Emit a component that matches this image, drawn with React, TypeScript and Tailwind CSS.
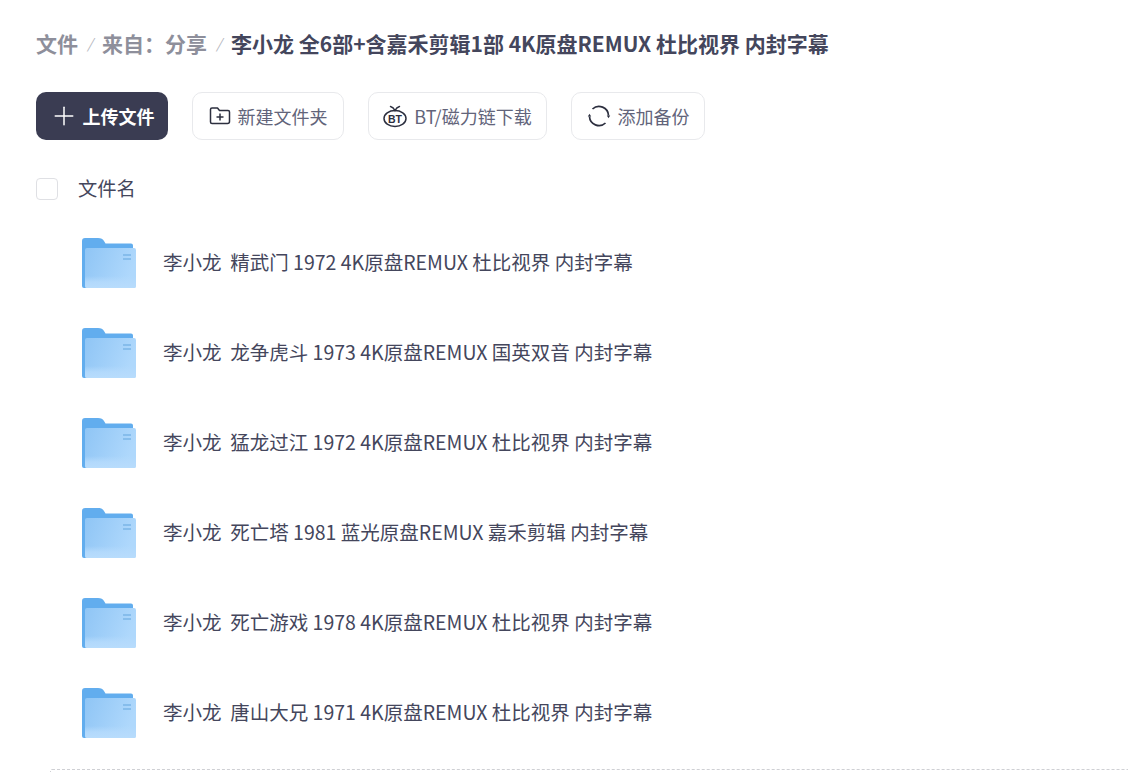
import React from 'react';
import { Plus } from 'lucide-react';

const files = [
  '精武门 1972 4K原盘REMUX 杜比视界 内封字幕',
  '龙争虎斗 1973 4K原盘REMUX 国英双音 内封字幕',
  '猛龙过江 1972 4K原盘REMUX 杜比视界 内封字幕',
  '死亡塔 1981 蓝光原盘REMUX 嘉禾剪辑 内封字幕',
  '死亡游戏 1978 4K原盘REMUX 杜比视界 内封字幕',
  '唐山大兄 1971 4K原盘REMUX 杜比视界 内封字幕',
];

const FolderIcon = ({ id }: { id: number }) => (
  <svg width="54" height="50" viewBox="0 0 54 50" className="shrink-0">
    <defs>
      <linearGradient id={`front-${id}`} x1="0" y1="0" x2="1" y2="0.3">
        <stop offset="0" stopColor="#8fc5f5" />
        <stop offset="1" stopColor="#afd8fc" />
      </linearGradient>
      <linearGradient id={`band-${id}`} x1="0" y1="0" x2="0" y2="1">
        <stop offset="0" stopColor="#b4dafc" stopOpacity="0" />
        <stop offset="0.5" stopColor="#b4dafc" stopOpacity="0.9" />
        <stop offset="1" stopColor="#b8dcfc" />
      </linearGradient>
    </defs>
    <path d="M0 3a3 3 0 0 1 3-3h13c3 0 5 1 6 3l1.500 2.500H49a2 2 0 0 1 2 2V46a4 4 0 0 1-4 4H2a2 2 0 0 1-2-2z" fill="#62adee" />
    <rect x="3" y="10" width="51" height="40" rx="2" fill={`url(#front-${id})`} />
    <rect x="3" y="38" width="51" height="12" rx="2" fill={`url(#band-${id})`} />
    <rect x="41" y="16" width="8" height="2" fill="#86bdec" />
    <rect x="41" y="20" width="8" height="2" fill="#86bdec" />
  </svg>
);

const NewFolderIcon = () => (
  <svg width="22" height="20" viewBox="0 0 22 20" fill="none" stroke="#2c2f3f" strokeWidth="1.500">
    <path d="M1.500 3.500a1.500 1.500 0 0 1 1.500-1.500h5.500l2 2.500H19a1.500 1.500 0 0 1 1.500 1.500v9.500a2 2 0 0 1-2 2H3a1.500 1.500 0 0 1-1.500-1.500z" strokeLinejoin="round" />
    <path d="M7.500 11h7M11 7.500v7" />
  </svg>
);

const BtIcon = () => (
  <svg width="24" height="24" viewBox="0 0 24 24" fill="none" stroke="#2c2f3f" strokeWidth="1.500">
    <ellipse cx="12" cy="14.500" rx="11" ry="8" />
    <path d="M7.500 2.500c2 .5 3.500 2 4.500 4 1-2 2.500-3.500 4.500-4" strokeLinecap="round" />
    <text x="12" y="18.500" textAnchor="middle" fontSize="10.500" fontWeight="700" fill="#2c2f3f" stroke="none" fontFamily="'Liberation Sans', sans-serif">BT</text>
  </svg>
);

const SyncIcon = () => (
  <svg width="24" height="24" viewBox="0 0 24 24" fill="none" stroke="#2c2f3f" strokeWidth="1.700">
    <path d="M5.500 5A9.500 9.500 0 0 1 21.500 11.500" />
    <path d="M18.500 19A9.500 9.500 0 0 1 2.500 12.500" />
    <path d="M19.800 11.500h3.400l-1.700 2.800z" fill="#2c2f3f" stroke="none" />
    <path d="M.8 12.500h3.400l-1.700-2.800z" fill="#2c2f3f" stroke="none" />
  </svg>
);

const ToolButton = ({ icon, label, width }: { icon: React.ReactNode; label: string; width: string }) => (
  <button className={`${width} h-12 flex items-center justify-center gap-[7px] bg-white border border-[#e8e9ec] rounded-[10px] text-[18px] text-[#62647a]`}>
    {icon}
    <span>{label}</span>
  </button>
);

const Slash = () => <span className="mx-[9.250px] text-[14px] font-normal text-[#b4b5bd] italic">/</span>;

export default function App() {
  return (
    <div className="h-[772px] overflow-hidden bg-white font-['Noto_Sans_CJK_SC','Noto_Sans',sans-serif]">
      <div className="pl-9 pt-[28px]">
        <div className="h-[30px] flex items-center text-[21px] font-bold leading-[30px] text-[#8e8f9b]">
          <span>文件</span>
          <Slash />
          <span>来自：分享</span>
          <Slash />
          <span className="text-[#44465c]">李小龙 全6部+含嘉禾剪辑1部 4K原盘REMUX 杜比视界 内封字幕</span>
        </div>

        <div className="mt-[34px] flex gap-6">
          <button className="w-[132px] h-12 flex items-center justify-center gap-1 pr-[1px] bg-[#3a3c52] rounded-[10px] text-[18px] font-bold text-white">
            <Plus size={30} strokeWidth={1.200} />
            <span>上传文件</span>
          </button>
          <ToolButton icon={<NewFolderIcon />} label="新建文件夹" width="w-[152px]" />
          <ToolButton icon={<BtIcon />} label="BT/磁力链下载" width="w-[179px]" />
          <ToolButton icon={<SyncIcon />} label="添加备份" width="w-[134px]" />
        </div>

        <div className="mt-[34px] flex items-center gap-5">
          <div className="w-[22px] h-[22px] bg-white border border-[#dfe0e4] rounded-[4px]" />
          <span className="text-[19.300px] leading-[28px] pb-[2px] text-[#44465c]">文件名</span>
        </div>

        <div className="mt-[34px] flex flex-col gap-10 pl-[46px]">
          {files.map((name, i) => (
            <div key={name} className="h-[50px] flex items-center gap-[27px] text-[19.500px] text-[#44465c]">
              <FolderIcon id={i} />
              <span className="whitespace-pre pb-[2px]">{`李小龙  ${name}`}</span>
            </div>
          ))}
        </div>

        <div className="mt-[31px] ml-[14px] h-10 border-t border-l border-dashed border-[#cfd0d4] rounded-tl-[2px]" />
      </div>
    </div>
  );
}
